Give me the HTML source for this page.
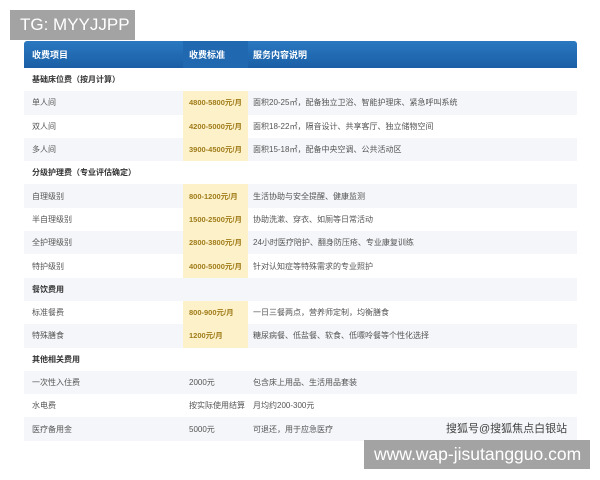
<!DOCTYPE html>
<html><head><meta charset="utf-8"><style>
body{margin:0;width:600px;height:480px;background:#fff;position:relative;overflow:hidden;font-family:"Liberation Sans","Noto Sans CJK SC",sans-serif;}
.tbl{position:absolute;left:24px;top:41px;width:553px;}
.hd{height:27px;background:linear-gradient(#2a78c0,#1a5fa6);color:#fff;font-weight:bold;font-size:9px;display:flex;align-items:center;border-radius:3px 3px 0 0;}
.r{height:23.3px;display:flex;align-items:center;font-size:8px;color:#555;}
.r.g{background:#f4f6f9;}
.c1{width:159px;padding-left:8px;box-sizing:border-box;height:100%;display:flex;align-items:center;}
.c2{width:65px;padding-left:6px;box-sizing:border-box;height:100%;display:flex;align-items:center;white-space:nowrap;}
.c3{flex:1;padding-left:5px;height:100%;display:flex;align-items:center;}
.y{background:#fdf1c9;color:#a07c1a;font-weight:bold;font-size:7.5px;}
.s{font-weight:bold;color:#333;}
.hd .c2{background:#2068b0;}
.wm{position:absolute;background:#a3a3a3;color:#fff;white-space:nowrap;}
</style></head><body>
<div class="tbl">
<div class="hd"><div class="c1">收费项目</div><div class="c2">收费标准</div><div class="c3">服务内容说明</div></div>
<div class="r"><div class="c1 s">基础床位费（按月计算）</div></div>
<div class="r g"><div class="c1">单人间</div><div class="c2 y">4800-5800元/月</div><div class="c3">面积20-25㎡，配备独立卫浴、智能护理床、紧急呼叫系统</div></div>
<div class="r"><div class="c1">双人间</div><div class="c2 y">4200-5000元/月</div><div class="c3">面积18-22㎡，隔音设计、共享客厅、独立储物空间</div></div>
<div class="r g"><div class="c1">多人间</div><div class="c2 y">3900-4500元/月</div><div class="c3">面积15-18㎡，配备中央空调、公共活动区</div></div>
<div class="r"><div class="c1 s">分级护理费（专业评估确定）</div></div>
<div class="r g"><div class="c1">自理级别</div><div class="c2 y">800-1200元/月</div><div class="c3">生活协助与安全提醒、健康监测</div></div>
<div class="r"><div class="c1">半自理级别</div><div class="c2 y">1500-2500元/月</div><div class="c3">协助洗漱、穿衣、如厕等日常活动</div></div>
<div class="r g"><div class="c1">全护理级别</div><div class="c2 y">2800-3800元/月</div><div class="c3">24小时医疗陪护、翻身防压疮、专业康复训练</div></div>
<div class="r"><div class="c1">特护级别</div><div class="c2 y">4000-5000元/月</div><div class="c3">针对认知症等特殊需求的专业照护</div></div>
<div class="r g"><div class="c1 s">餐饮费用</div></div>
<div class="r"><div class="c1">标准餐费</div><div class="c2 y">800-900元/月</div><div class="c3">一日三餐两点，营养师定制，均衡膳食</div></div>
<div class="r g"><div class="c1">特殊膳食</div><div class="c2 y">1200元/月</div><div class="c3">糖尿病餐、低盐餐、软食、低嘌呤餐等个性化选择</div></div>
<div class="r"><div class="c1 s">其他相关费用</div></div>
<div class="r g"><div class="c1">一次性入住费</div><div class="c2">2000元</div><div class="c3">包含床上用品、生活用品套装</div></div>
<div class="r"><div class="c1">水电费</div><div class="c2">按实际使用结算</div><div class="c3">月均约200-300元</div></div>
<div class="r g"><div class="c1">医疗备用金</div><div class="c2">5000元</div><div class="c3">可退还，用于应急医疗</div></div>
</div>
<div style="position:absolute;left:446px;top:420px;font-size:11px;color:#444;">搜狐号@搜狐焦点白银站</div>
<div class="wm" style="left:10px;top:10px;width:125px;height:30px;font-size:17px;line-height:30px;padding-left:10px;box-sizing:border-box;">TG: MYYJJPP</div>
<div class="wm" style="left:364px;top:440px;width:226px;height:29px;font-size:17.5px;line-height:29px;padding-left:10px;box-sizing:border-box;">www.wap-jisutangguo.com</div>
</body></html>
